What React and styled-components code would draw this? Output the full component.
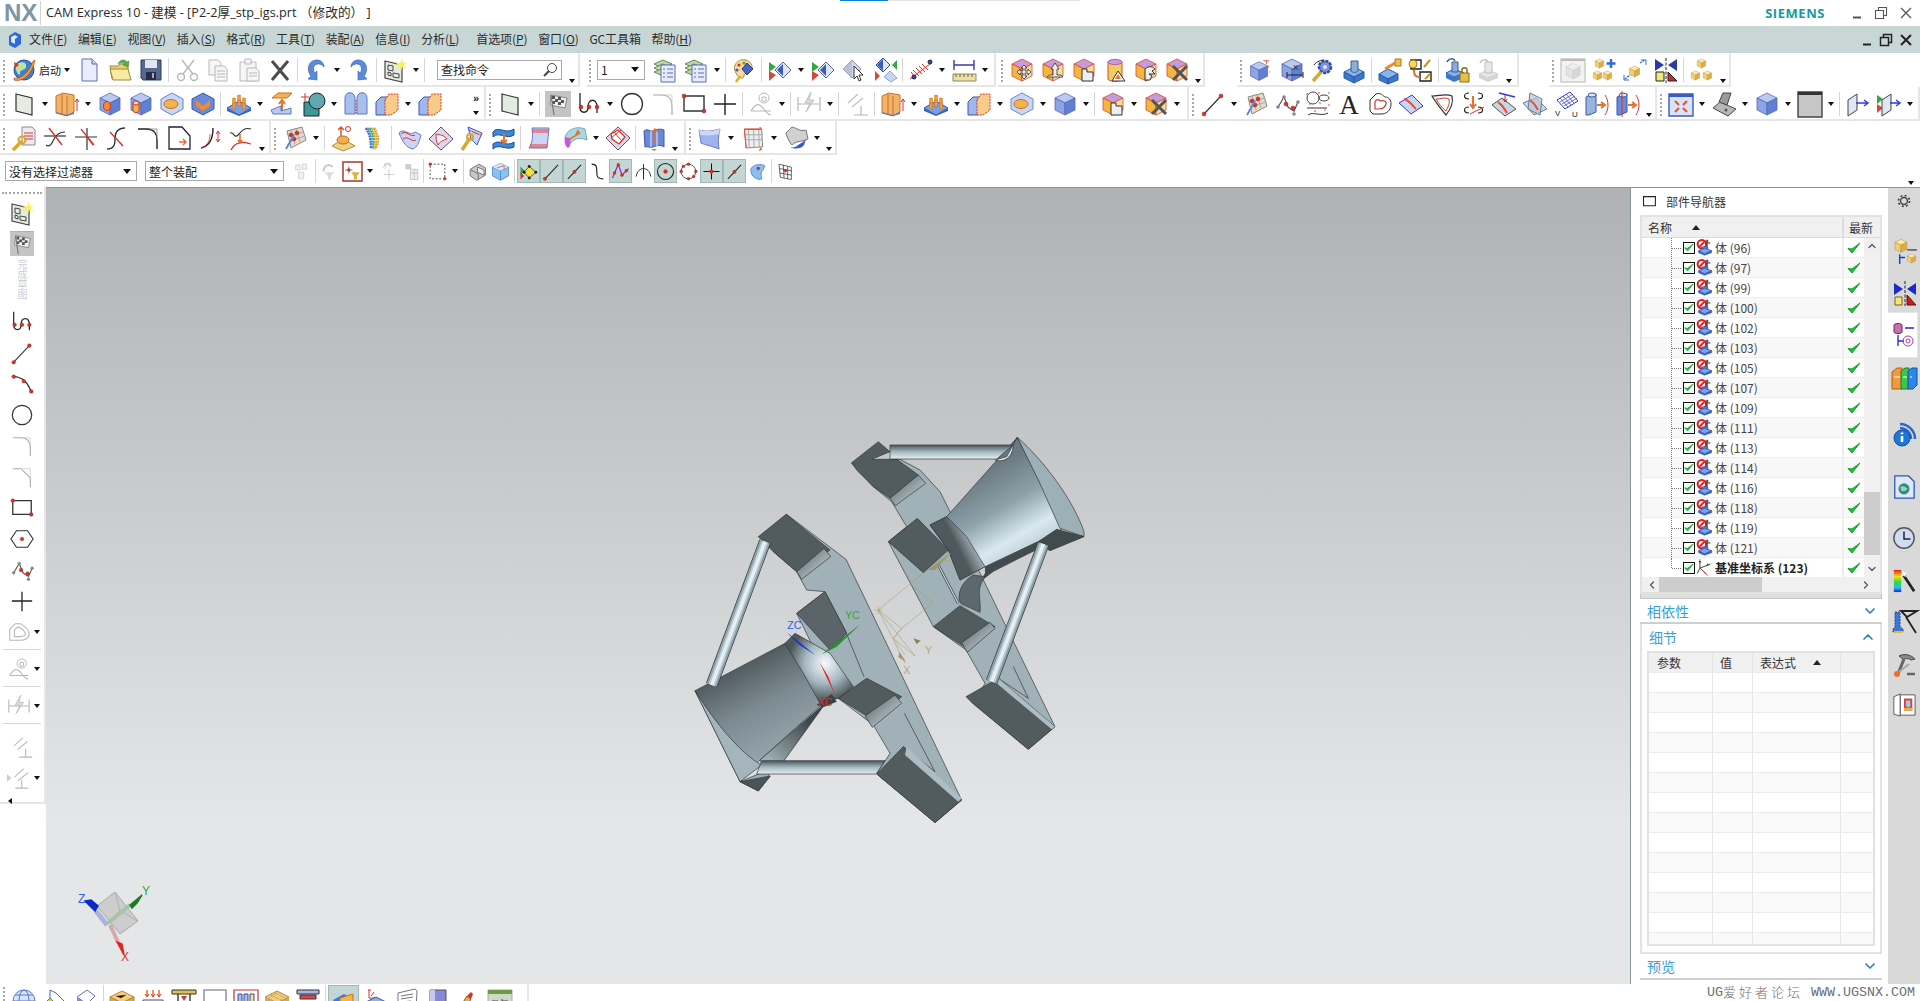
import React from 'react';
import styled, { createGlobalStyle } from 'styled-components';
import { ChevronDown, ChevronUp, ChevronLeft, ChevronRight } from 'lucide-react';

const Global = createGlobalStyle`
  html, body { margin: 0; padding: 0; background: #fff; overflow: hidden; }
  #root { width: 1920px; height: 1001px; }
  * { box-sizing: border-box; }
`;
const UI = `"Noto Sans CJK SC", "Noto Sans", sans-serif`;

const cube = (t, l, r, s = '#5a68a8') => (
  <g stroke={s} strokeWidth=".8" strokeLinejoin="round">
    <path d="M13 2 23 7 13 12 3 7Z" fill={t} /><path d="M3 7 13 12V24L3 19Z" fill={l} /><path d="M23 7V19L13 24V12Z" fill={r} />
  </g>
);
const blue = () => cube('#b9c9f2', '#8aa4e6', '#5f80d6');
const yellow = (x, y, k = .42) => <g transform={`translate(${x} ${y}) scale(${k})`}>{cube('#fde9a8', '#f3cf72', '#e0ad45', '#a98a3a')}</g>;
const purple = (o) => <g>{cube('#c79ad8', '#f6b63c', '#f9dc96', '#d2483c')}{o}</g>;
const dot = (x, y, r = 2) => <circle cx={x} cy={y} r={r} fill="#d8322a" stroke="#8a1a16" strokeWidth=".4" />;
const L = (d, c = '#333', w = 1.2) => <path d={d} fill="none" stroke={c} strokeWidth={w} />;
const gr = '#b8b8b8';
const noSign = <g><circle cx="9" cy="8" r="6.500" fill="#fff" stroke="#d81c1c" strokeWidth="3" /><path d="M5 12 13 4" stroke="#d81c1c" strokeWidth="3" /></g>;

const icons = {
  globe: <g><circle cx="13" cy="13" r="10" fill="#3f7fd8" stroke="#234a94" /><path d="M8 6c4-2 8 0 7 4s-6 2-6 6-3 0-4-3 1-6 3-7Z" fill="#bfe3a0" /><path d="M3 21C9 23 18 16 22 4l2-1C22 16 12 26 3 23Z" fill="#f0a020" stroke="#b2401c" strokeWidth=".6" /><path d="M3 5l5 3-4 3Z" fill="#d8322a" /></g>,
  doc: <g><path d="M6 2h10l5 5v17H6Z" fill="#e9eefc" stroke="#5a6ab8" /><path d="M16 2v5h5" fill="#c9d4f2" stroke="#5a6ab8" /></g>,
  folder: <g><path d="M3 9h8l2-2h8v15H5Z" fill="#e8d070" stroke="#9a8a3a" /><path d="M3 12h18l3 11H6Z" fill="#f8eaa0" stroke="#9a8a3a" /><path d="M11 7C13 2 18 2 20 5l2-1-1 6-5-2 2-1c-2-2-5-1-7 0Z" fill="#58b04a" stroke="#2f7a2a" strokeWidth=".5" /></g>,
  floppy: <g><path d="M3 3h20v20H5l-2-2Z" fill="#56688e" stroke="#2d3b5c" /><path d="M7 3h12v8H7Z" fill="#dfe6f2" /><path d="M8 15h10v8H8Z" fill="#222d46" /><path d="M14 16h2v5h-2Z" fill="#aab" /></g>,
  scissors: <g stroke={gr} strokeWidth="1.4" fill="none"><path d="M20 3 9 17M8 3l11 14" /><circle cx="7" cy="20" r="3.5" /><circle cx="20" cy="20" r="3.5" /></g>,
  copy: <g stroke={gr} fill="#f6f6f6"><path d="M4 3h9l3 3v12H4Z" /><path d="M10 9h9l3 3v12H10Z" /><path d="M12 14h8M12 17h8M12 20h8" /></g>,
  paste: <g stroke={gr} fill="#f6f6f6"><path d="M4 5h16v19H4Z" /><path d="M9 2h6v5H9Z" /><path d="M11 11h9l3 3v10H11Z" /><path d="M13 16h8M13 19h8" /></g>,
  x: <path d="M5 4 21 23M21 4 5 23" stroke="#4c4c4c" strokeWidth="3" />,
  undo: <g><path d="M8 21C2 13 7 4 15 5c3 .4 6 3 6 7-2-3-6-4-9-2-2 2-2 6 0 8l2-2v9l-9-1Z" transform="translate(0 -2)" fill="#5a8ad8" stroke="#2c5ab0" strokeWidth=".6" /></g>,
  redo: <g transform="matrix(-1 0 0 1 26 0)"><path d="M8 21C2 13 7 4 15 5c3 .4 6 3 6 7-2-3-6-4-9-2-2 2-2 6 0 8l2-2v9l-9-1Z" transform="translate(0 -2)" fill="#5a8ad8" stroke="#2c5ab0" strokeWidth=".6" /></g>,
  role: <g><path d="M3 4 20 8V25L3 21Z" fill="#e6ebe2" stroke="#444" strokeWidth="1.2" /><path d="M6 8l5 1v5l-5-1ZM6 15l3 1v3l-3-1ZM11 16l6 1v4l-6-1Z" fill="none" stroke="#444" /><path d="M20 1l1 5 4-1-3 3 3 3-5-1-1 4-2-4-4 1 3-3-3-3 5 1Z" fill="#f8ee70" /></g>,
  stack: <g><path d="M2 7 11 3 20 7 11 11Z" fill="#b8d8a0" stroke="#6a8a5a" /><path d="M2 11 11 7 20 11 11 15Z" fill="#c8e0b0" stroke="#6a8a5a" /><path d="M2 15 11 11 20 15 11 19Z" fill="#b8d8a0" stroke="#6a8a5a" /><path d="M9 8h14v17H9Z" fill="#e6ecfa" stroke="#5a6ab8" /><path d="M11 12h2M15 12h6M11 16h2M15 16h6M11 20h2M15 20h6" stroke="#5a6ab8" /></g>,
  palette: <g><path d="M5 16C0 8 8 1 15 3c6 2 8 8 4 11-4 2-6 2-6 5s-6 3-8-3Z" fill="#f6dc98" stroke="#b08a3a" /><circle cx="8" cy="8" r="1.6" fill="#d8322a" /><circle cx="13" cy="6" r="1.6" fill="#48a848" /><circle cx="6" cy="13" r="1.6" fill="#3a5ac8" /><path d="M16 6l6 6-6 6-5-6Z" fill="#4a62c0" stroke="#223a90" /><path d="M9 19l-4 6" stroke="#e0b030" strokeWidth="2.5" /></g>,
  diaL: <g><path d="M2 5l7 5-7 5Z" fill="#34a848" /><path d="M2 14l7 4-7 6Z" fill="#d8483a" /><path d="M16 5l8 8-8 8-8-8Z" fill="#dfe6f6" stroke="#56689a" /><path d="M16 7l-6 6 6 6Z" fill="#3a5cc0" /></g>,
  diaC: <g><path d="M11 3l9 9-9 9-9-9Z" fill="#d3d8ea" stroke="#8a92b0" /><path d="M11 3v18l-9-9Z" fill="#b8c0da" /><path d="M13 9l9 9-4 0 2 5-2 1-2-5-3 3Z" fill="#fff" stroke="#333" /></g>,
  dia4: <g><path d="M11 1l7 7-7 7-7-7Z" fill="#dfe6f6" stroke="#334a90" /><path d="M11 2v12l-6-6Z" fill="#3a5cc0" /><path d="M18 14l7 7-6 4-7-5Z" fill="#c8d6f6" stroke="#8aa4e6" /><path d="M25 3v10l-5-5Z" fill="#34a848" /><path d="M3 14l5 5-5 5Z" fill="#d8483a" /></g>,
  axis: <g stroke="#d8322a" strokeWidth="1"><path d="M2 22 22 7" /><path d="M5 13l6 6M8 11l6 6M11 9l6 6M14 7l6 6M3 15l5 6" /><circle cx="22" cy="5" r="2" fill="#3a4ab8" stroke="#222" /><circle cx="6" cy="20" r="2" fill="#3a4ab8" stroke="#222" /></g>,
  ruler: <g><path d="M3 3v10M23 3v10M3 8h20" stroke="#3a3ab0" strokeWidth="1.4" /><path d="M2 17h23v7H2Z" fill="#f0e0a0" stroke="#8a8a6a" /><path d="M5 17v3M9 17v3M13 17v3M17 17v3M21 17v3" stroke="#665" /></g>,
  pMove: purple(<path d="M15 8l3 3h-2v3h3v-2l3 3-3 3v-2h-3v3h2l-3 3-3-3h2v-3h-3v2l-3-3 3-3v2h3v-3h-2Z" fill="#eee" stroke="#333" strokeWidth=".8" />),
  pUp: purple(<path d="M15 6l4 6h-2v6h4l2 2H7l2-2h4v-6h-2Z" fill="#eee" stroke="#333" strokeWidth=".8" />),
  pHand: purple(<path d="M11 12h5v3h6v9H11Z" fill="#eee" stroke="#333" />),
  cyl: <g><path d="M6 5v17c0 3 14 3 14 0V5Z" fill="#f4cc5c" stroke="#d2483c" /><ellipse cx="13" cy="5" rx="7" ry="2.6" fill="#c79ad8" stroke="#a060b8" /><path d="M16 14l7 10H10Z" fill="#fff" stroke="#333" /><path d="M16 17l3 5h-6Z" fill="#e87030" /></g>,
  pSwap: purple(<path d="M12 12c4-4 9-2 10 0l-3 2 3 3-6 0 3 2-2 4h-5Z" fill="#eee" stroke="#333" />),
  pX: purple(<path d="M9 9 23 23M23 9 9 23" stroke="#555" strokeWidth="3" />),
  bMeas: <g transform="translate(0 3) scale(.85)">{blue()}<path d="M18 1h7M22 1v4M25 7l-3 3" stroke="#d8322a" /><path d="M25 14h1" stroke="#d8322a" /></g>,
  bX: <g>{blue()}<path d="M8 18h16M8 15v6M24 15v6" stroke="#222" /><text x="14" y="13" fontSize="8" fontFamily="Liberation Sans" fill="#222">X</text></g>,
  gear: <g><circle cx="15" cy="10" r="6" fill="#7a92d8" stroke="#324a98" strokeDasharray="3 1" strokeWidth="2.5" /><circle cx="15" cy="10" r="2" fill="#dfe6f6" /><path d="M3 24 11 15" stroke="#d8a830" strokeWidth="3.5" /><path d="M4 8c3-4 8-5 10-5" stroke="#222" fill="none" /></g>,
  blockCyl: <g transform="translate(0 4)">{<path d="M3 11 13 6 23 11 13 16Z" fill="#8ab4e8" stroke="#2c5ab0" />}<path d="M3 11v6l10 5V16ZM23 11v6l-10 5V16Z" fill="#3a78c8" stroke="#2c5ab0" /><path d="M10 0h7v10c-2 2-5 2-7 0Z" fill="#8ab0d8" stroke="#3a5a90" /></g>,
  blockLink: <g transform="translate(0 4)"><path d="M2 13 11 8 21 13 11 18Z" fill="#8ab4e8" stroke="#2c5ab0" /><path d="M2 13v6l9 4v-5ZM21 13v6l-10 4v-5Z" fill="#3a78c8" stroke="#2c5ab0" /><path d="M8 8 18 2" stroke="#e89030" strokeWidth="3" /><path d="M18 -2h6v7h-6Z" fill="#f0c050" stroke="#b07020" /></g>,
  linkEd: <g><path d="M3 3h10v9H3ZM12 15h11v9H12Z" fill="#fff" stroke="#222" strokeWidth="1.4" /><circle cx="5" cy="7" r="4" fill="#f6d860" stroke="#a08020" /><path d="M6 13c0 6 2 7 6 7" stroke="#e87030" strokeWidth="2" fill="none" /><path d="M16 10 22 3" stroke="#c89020" strokeWidth="2" /><path d="M17 22 22 17" stroke="#c89020" strokeWidth="2" /></g>,
  lock: <g><g transform="translate(0 1)"><path d="M2 15 10 11 20 15 10 19Z" fill="#8ab4e8" stroke="#2c5ab0" /><path d="M2 15v5l8 4v-5ZM20 15v5l-10 4v-5Z" fill="#3a78c8" /><path d="M8 4h6v10H8Z" fill="#8ab0d8" stroke="#3a5a90" /></g><path d="M3 5c2-4 7-4 8-1" stroke="#3a5a90" fill="none" strokeWidth="1.5" /><path d="M16 16h9v9h-9Z" fill="#e6c040" stroke="#8a6a1a" /><path d="M18 16v-3c0-3 5-3 5 0v3" stroke="#8a6a1a" fill="none" strokeWidth="1.5" /></g>,
  lockG: <g opacity=".95"><path d="M4 17 13 13 23 17 13 21Z" fill="#e6e6e6" stroke="#ccc" /><path d="M4 17v4l9 4v-4ZM23 17v4l-10 4v-4Z" fill="#d2d2d2" /><path d="M10 5h7v11h-7Z" fill="#e6e6e6" stroke="#bbb" /><path d="M5 6c2-4 7-4 8-1" stroke="#bbb" fill="none" strokeWidth="1.5" /></g>,
  cubesG: <g><path d="M1 2h24v23H1Z" fill="#f2f2f2" stroke="#ccc" strokeWidth="1.5" /><path d="M1 2h24v2H1Z" fill="#bbb" /><g transform="translate(4 5) scale(.7)" opacity=".7">{cube('#eee', '#ddd', '#ccc', '#bbb')}</g></g>,
  cubesAdd: <g>{yellow(3, 1)}{yellow(1, 13)}{yellow(11, 13)}<path d="M20 2v9M15.5 6.500h9" stroke="#2c68e0" strokeWidth="2.4" /></g>,
  cubeScale: <g>{yellow(6, 8, .5)}<path d="M18 6l5-3M3 22l5-4" stroke="#3a68d0" strokeDasharray="2 1" strokeWidth="1.4" /><path d="M19 3h5v5M2 18v5h5" stroke="#3a68d0" fill="none" /></g>,
  mirror: <g><path d="M2 2l9 6-9 6ZM24 2l-9 6 9 6Z" fill="#2c3aa8" /><path d="M13 1v25" stroke="#222" strokeDasharray="3 1.5" /><path d="M3 15h8v9H3Z" fill="#f2e878" stroke="#222" /><path d="M15 15l9 9h-9Z" fill="#c8302a" stroke="#222" /></g>,
  cubes3: <g>{yellow(7, 1)}{yellow(1, 13)}{yellow(13, 13)}</g>,
  plane: <path d="M5 3 21 7V24L5 20Z" fill="#e4ece2" stroke="#333" strokeWidth="1.2" />,
  extrude: <g><path d="M2 5l7-3 11 2v17l-7 4-11-3Z" fill="#f4b266" stroke="#c8702a" /><path d="M8 3v20M13 5v20" stroke="#c8702a" /><path d="M2 21l11 3 7-3v2l-7 2-11-3Z" fill="#5a78c8" /><path d="M23 20V8M21 11l2-3 2 3" stroke="#d8322a" fill="none" /></g>,
  hole1: <g>{blue()}<ellipse cx="10" cy="15" rx="3.500" ry="4.500" fill="#f08a30" stroke="#d8322a" /></g>,
  hole2: <g>{blue()}<path d="M5 12h6v8c-1 2-5 2-6 0Z" fill="#f4b24a" stroke="#d8322a" /><ellipse cx="8" cy="12" rx="3" ry="2" fill="#f9dc96" stroke="#d8322a" /></g>,
  hex1: <g><path d="M13 2 24 8V18L13 24 2 18V8Z" fill="#c6d6f4" stroke="#6a88c8" /><ellipse cx="12" cy="13" rx="7" ry="4.500" fill="#f4b24a" stroke="#c8702a" /></g>,
  hex2: <g><path d="M13 2 24 8V18L13 24 2 18V8Z" fill="#6a8ad8" stroke="#3a58a8" /><path d="M6 9l7 6 7-6v6l-7 5-7-5Z" fill="#f08a30" /></g>,
  pegs: <g><path d="M1 17 13 10 25 17 13 24Z" fill="#7aa0e0" stroke="#3a58a8" /><path d="M1 17v3l12 5v-1ZM25 17v3l-12 5v-1Z" fill="#3a68c0" />{[[8, 10], [13, 7], [18, 10], [8, 15], [13, 12], [18, 15]].map(([x, y]) => <path key={x + '-' + y} d={`M${x - 1.5} ${y - 3}h3v6h-3Z`} fill="#f09a3a" stroke="#c06a1a" strokeWidth=".4" />)}</g>,
  plateUp: <g><path d="M3 7 9 2H23L18 7Z" fill="#f4b24a" stroke="#c8702a" /><path d="M13 21V10M10 13l3-4 3 4" stroke="#e8702a" strokeWidth="2" fill="none" /><path d="M2 19l10-4v5l10-3v6H4Z" fill="#b8ccf0" stroke="#5a78c8" /></g>,
  unite: <g><path d="M1 6h8M5 2v8" stroke="#d8322a" /><path d="M4 11h15v14H4Z" fill="#3a9a98" stroke="#222" /><circle cx="17" cy="10" r="8" fill="#60a8b0" stroke="#222" /></g>,
  tubes: <g><path d="M2 23V7c0-7 10-7 10 0v16Z" fill="#a8c0ee" stroke="#5a78c8" /><path d="M14 23V7c0-7 10-7 10 0v16Z" fill="#a8c0ee" stroke="#5a78c8" /><path d="M13 9v14" stroke="#d8322a" strokeDasharray="2 1" /></g>,
  split: <g><path d="M2 11 7 6H16V22L11 24H2Z" fill="#9eb8ee" stroke="#3a58a8" /><path d="M11 9 15 3H24V19L17 24H11Z" fill="#f6cc88" stroke="#d8322a" strokeDasharray="2 1" /></g>,
  flag: <g><path d="M0 0h26v26H0Z" fill="#c4c4c4" /><path d="M6 4l16 3-2 10-15-3Z" fill="#eee" stroke="#888" /><path d="M7 5h3v3H7ZM13 6h3v3h-3ZM10 8h3v3h-3ZM16 9h3v3h-3ZM7 10h3v3H7ZM13 11h3v3h-3Z" fill="#555" /><path d="M6 4 9 24" stroke="#777" strokeWidth="1.2" /></g>,
  spline: <g>{L('M4 2v14c0 7 8 7 8 0 0-9 9-9 9 0v6', '#222', 1.3)}{dot(5, 16)}{dot(13, 16)}{dot(21, 16)}</g>,
  circle: <circle cx="13" cy="13" r="10.5" fill="none" stroke="#333" strokeWidth="1.3" />,
  fillet: <g>{L('M3 4h9c7 0 10 5 10 11v9', '#aaa')}{L('M14 4h8v9', '#ccc', .8)}</g>,
  chamfer: <g>{L('M3 4h9l10 10v10', '#aaa')}{L('M14 4h8v9', '#ccc', .8)}</g>,
  rect: <g>{L('M3 5h20v15H3Z', '#333', 1.4)}{dot(3, 5)}{dot(23, 20)}</g>,
  cross: L('M13 3v21M2 13h22', '#222', 1.4),
  hexS: <g>{L('M7 4h12l6 9-6 9H7L1 13Z', '#333', 1.2)}{dot(13, 13)}</g>,
  studio: <g>{L('M4 16 10 6 14 16 20 20 24 11', '#555')}<circle cx="4" cy="16" r="1.8" fill="#888" /><circle cx="10" cy="6" r="1.8" fill="#888" /><circle cx="20" cy="23" r="1.8" fill="#888" /><circle cx="24" cy="11" r="1.8" fill="#888" />{dot(12, 13)}{dot(19, 17)}</g>,
  line: <g>{L('M4 23 21 5', '#333')}{dot(4, 23)}{dot(21, 5)}</g>,
  arc: <g>{L('M4 5c9 0 16 7 19 17', '#333', 1.4)}{dot(4, 5)}{dot(15, 10)}{dot(23, 21)}</g>,
  offset: <g>{L('M3 22V10l6-6h6c4 3 9 6 9 11s-5 7-9 7Z', gr)}{L('M8 18v-7l3-3h3c3 3 6 4 6 7 0 2-2 3-6 3Z', gr)}</g>,
  skGray: <g>{L('M3 20h20M3 20c5-8 8-8 12-3 2 3 4 6 8 7', gr)}<circle cx="16" cy="7" r="5" fill="none" stroke={gr} /><path d="M14 6h4v4h-4Z" fill="none" stroke={gr} /></g>,
  dimGray: <g>{L('M2 6v14M24 6v14M2 13h22', gr)}<path d="M15 1 9 12h5l-4 9 8-12h-5Z" fill="#ddd" stroke="#c0c0c0" /></g>,
  parallel: <g>{L('M4 12 14 3M8 16 19 7', '#c0c0c0', 1.2)}{L('M10 24h14M17 24v-9', '#b8b8b8')}</g>,
  parallel2: <g><path d="M0 9l5 4-5 4Z" fill="#ccc" />{L('M8 12 18 3M12 16 23 7', '#c0c0c0', 1.2)}{L('M9 24h14M16 24v-9', '#b8b8b8')}</g>,
  frame: <g><path d="M1 3h24v22H1Z" fill="#d8e4f8" stroke="#3a58c8" strokeWidth="1.4" /><path d="M1 3h24v3H1Z" fill="#3a58c8" /><path d="M7 10l4 4M19 10l-4 4M7 21l4-4M19 21l-4-4" stroke="#e8502a" strokeWidth="2" /></g>,
  printer: <g><path d="M2 17 9 11 25 18 17 25Z" fill="#b8b8b8" stroke="#444" /><path d="M8 11 12 2h8l-4 12Z" fill="#9a9a9a" stroke="#444" /><circle cx="15" cy="19" r="1.500" fill="#555" /></g>,
  bCube: blue(),
  grayPanel: <g><path d="M1 1h24v25H1Z" fill="#c6c6c6" stroke="#444" strokeWidth="1.4" /><path d="M1 1h24v3H1Z" fill="#333" /></g>,
  slabA: <g><path d="M3 9l9-6v16l-9 6Z" fill="#dfe6f6" stroke="#444" /><path d="M11 12h12M19 9l4 3-4 3" stroke="#2c3ae0" strokeWidth="1.4" fill="none" /></g>,
  slabB: <g><path d="M1 4l6 4-6 5Z" fill="#34a848" /><path d="M1 13l6 4-6 5Z" fill="#d8483a" /><path d="M6 9l9-6v16l-9 6Z" fill="#dfe6f6" stroke="#444" /><path d="M14 12h10M20 9l4 3-4 3" stroke="#2c3ae0" strokeWidth="1.4" fill="none" /></g>,
  pts: <g><path d="M3 24C8 20 16 26 23 22" stroke="#333" fill="none" /><ellipse cx="8" cy="7" rx="6" ry="6" fill="none" stroke="#444" /><ellipse cx="19" cy="7" rx="5" ry="3" fill="none" stroke="#444" /><path d="M2 17h20" stroke="#333" />{[[2, 3], [14, 2], [24, 2], [5, 13], [15, 12], [24, 14], [10, 20], [20, 19]].map(([x, y]) => <circle key={x + '.' + y} cx={x} cy={y} r=".8" fill="#d8322a" />)}</g>,
  letterA: <text x="13" y="23" fontSize="27" textAnchor="middle" fontFamily="Liberation Serif" fill="#222">A</text>,
  heart: <g><path d="M3 9 9 3c5-2 7 2 9 3 4 0 6 3 6 7 0 7-5 10-10 10H6l-3-3Z" fill="#fff" stroke="#333" /><path d="M8 11c1-3 4-3 5-1 3-1 7 0 6 3-1 3-4 5-7 5H8Z" fill="none" stroke="#d8322a" strokeWidth="1.2" /></g>,
  sheetCurve: <g><path d="M1 12 14 4 25 15 13 23Z" fill="#c8d6f4" stroke="#2c3ae0" /><path d="M6 8c6 2 9 7 12 10" stroke="#e8502a" strokeWidth="2" fill="none" /></g>,
  patch: <g><path d="M3 5c7 0 14-3 20 0 2 8-2 14-6 19C12 18 7 12 3 5Z" fill="#fff" stroke="#333" strokeWidth="1.2" /><path d="M7 8c5 0 9-2 13 0 1 5-1 8-3 12-4-3-7-7-10-12Z" fill="none" stroke="#d8322a" /></g>,
  drop: <g>{L('M9 2C3 2 3 8 9 8M9 16c-6 0-6 6 0 6', '#222')}{L('M18 2c6 0 6 6 0 6M18 16c6 0 6 6 0 6', '#222')}<path d="M13 5v12M10 13l3 4 3-4" stroke="#e87030" strokeWidth="2" fill="none" /><path d="M10 23 24 16" stroke="#d8322a" /></g>,
  sheetPt: <g><path d="M1 14 11 7 25 18 14 25Z" fill="#c8d6e8" stroke="#555" /><path d="M8 2 24 6" stroke="#2c3ae0" strokeWidth="1.400" /><path d="M14 4v7M12 8l2 3 2-3" stroke="#b8322a" fill="none" /><path d="M7 11c4 3 7 7 9 11" stroke="#e8502a" strokeWidth="2" fill="none" /></g>,
  sheet2: <g><path d="M1 12 14 7 25 18 12 24Z" fill="#c8d6e8" stroke="#6a7a90" /><path d="M8 2 20 8 18 24 6 18Z" fill="#b8c6dc" fillOpacity=".7" stroke="#6a7a90" /><path d="M8 9c4 3 6 6 8 10" stroke="#e8502a" strokeWidth="2" fill="none" /></g>,
  meshUV: <g><path d="M4 9 17 1 25 10 12 18Z" fill="#fff" stroke="#2c3ae0" /><path d="M7 7l8 9M10 5l8 9M13 3l8 9M7 11l13-8M9 13l13-8M11 15l13-8" stroke="#2c3ae0" strokeWidth=".7" /><text x="2" y="25" fontSize="8" fontFamily="Liberation Sans" fill="#222">V</text><text x="19" y="26" fontSize="8" fontFamily="Liberation Sans" fill="#222">U</text></g>,
  cylA: <g><path d="M2 6 9 3h3v18l-7 3H2Z" fill="#9ab4e0" stroke="#3a58a8" /><ellipse cx="8" cy="4" rx="4" ry="2" fill="#dfe6f6" stroke="#3a58a8" /><path d="M13 14h7M17 11l4 3-4 3" stroke="#e87030" strokeWidth="2" fill="none" /><path d="M21 4c4 6 4 14 0 20" stroke="#d8322a" fill="none" /></g>,
  cylB: <g><path d="M2 6 9 3h3v18l-7 3H2Z" fill="#6a8ad8" stroke="#3a58a8" /><ellipse cx="8" cy="4" rx="4" ry="2" fill="#dfe6f6" stroke="#3a58a8" /><path d="M7 0v26" stroke="#d8322a" /><path d="M13 14h7M17 11l4 3-4 3" stroke="#e87030" strokeWidth="2" fill="none" /><path d="M21 4c4 6 4 14 0 20" stroke="#d8322a" fill="none" /></g>,
  wrenchDoc: <g><path d="M11 2h10l3 3v15H11Z" fill="#f2e8f0" stroke="#8a8a9a" /><path d="M13 8h9M13 11h9M13 14h9" stroke="#d8322a" /><path d="M2 25 11 16" stroke="#d8a830" strokeWidth="3.500" /><circle cx="11" cy="15" r="3.500" fill="none" stroke="#d8a830" strokeWidth="2" /></g>,
  trimX: <g>{L('M4 20c4 3 6-2 8-6s6-7 11-7', '#333', 1.2)}{L('M2 11h22', '#333')}<path d="M7 3 20 20" stroke="#d8322a" strokeWidth="1.4" /></g>,
  trimT: <g>{L('M2 12h22M14 3v22', '#333')}{L('M14 12 20 20', '#d8322a', 1.2)}<path d="M8 4 21 20" stroke="#d8322a" strokeWidth="1.200" /><path d="M14 4v6" stroke="#888" strokeDasharray="1 1" /></g>,
  curveX: <g>{L('M3 24c8 0 8-6 8-10s1-11 10-11', '#333', 1.4)}<path d="M6 7 19 21" stroke="#d8322a" strokeWidth="1.4" /></g>,
  filletD: <g>{L('M3 4h9c7 0 10 5 10 11v9', '#222', 1.4)}{L('M14 4h8v9', '#888', .8)}</g>,
  pageArrow: <g>{L('M3 2h13l8 9v13H3Z', '#223', 1.3)}<path d="M13 17h6M17 14l3 3-3 3" stroke="#e87030" strokeWidth="1.5" fill="none" /></g>,
  arcUp: <g>{L('M4 23c9-2 12-9 12-20', '#222', 1.4)}{L('M4 23c8-3 9-9 9-14', '#d8322a', .8)}<path d="M21 6v11M19 9l2-3 2 3M19 14l2 3 2-3" stroke="#d8322a" fill="none" /></g>,
  curves: <g>{L('M2 8c4-2 4 6 8 2s6-8 13-6', '#333')}<path d="M3 25c4-8 12-9 20-6" stroke="#d8322a" fill="none" strokeWidth="1.3" /><path d="M12 9v9M10 15l2 3 2-3" stroke="#e87030" strokeWidth="1.6" fill="none" /></g>,
  surfPts: <g><path d="M5 6 20 2 24 15 9 23Z" fill="#e8d8c8" stroke="#888" /><path d="M9 5l4 14M14 4l4 13M6 11l16-4M7 16l16-5" stroke="#aaa" />{dot(9, 10)}{dot(15, 8)}{dot(12, 14)}<path d="M4 24 12 10" stroke="#5a8ad8" strokeWidth="2" /></g>,
  hand: <g><path d="M2 21 13 14 25 21 13 26Z" fill="#f2d080" stroke="#b08a3a" /><ellipse cx="13" cy="15" rx="6" ry="4" fill="#f0b050" stroke="#c06a1a" /><path d="M11 11V2M8 5l3-3 3 3" stroke="#e8502a" strokeWidth="1.500" fill="none" /><circle cx="18" cy="4" r="2.500" fill="none" stroke="#d8322a" /></g>,
  swatch: <g>{['#4a62c8', '#4aa8d8', '#48b048', '#e0c030', '#f09a3a'].map((c, i) => <path key={c} d={`M${5 + i * 2} 3c5 8 5 14 ${5 - i} 21`} stroke={c} strokeWidth="2.600" fill="none" strokeDasharray="2 .7" />)}</g>,
  waveS: <g><path d="M2 8C7 2 12 12 18 7l6 3c-2 8-4 12-8 14-6-1-10-6-14-16Z" fill="#ccd4f4" stroke="#6a78c8" /><path d="M4 9c5-5 9 4 14 1M6 14c5-4 9 4 13 1" stroke="#d8322a" fill="none" /></g>,
  diaRed: <g><path d="M13 2 25 14 13 25 1 14Z" fill="#d8d8f0" stroke="#7a4a5a" /><path d="M8 9c4 1 8 1 11 5-3 1-8 3-9 6-2-3-2-8-2-11Z" fill="#f2f2fc" stroke="#d8322a" /></g>,
  wrenchFl: <g><path d="M9 2 23 8l-5 12-6-6Z" fill="#c8d6f4" stroke="#3a58c8" /><path d="M10 5c4 2 8 4 12 5" stroke="#d8322a" strokeDasharray="2 1" /><path d="M3 25 11 13" stroke="#d8a830" strokeWidth="3.500" /><circle cx="11" cy="12" r="3" fill="none" stroke="#d8a830" strokeWidth="2" /></g>,
  blueS: <g><path d="M3 7C8 0 16 10 24 4v6c-8 5-15-4-21 2Z" fill="#3a8ad8" stroke="#1c4a98" /><path d="M3 19C10 13 16 23 24 17v5c-8 4-15-4-21 2Z" fill="#3a8ad8" stroke="#1c4a98" /><path d="M14 9v9M11 15l3 3 3-3" stroke="#e8702a" strokeWidth="2" fill="none" /></g>,
  ribbon: <g><path d="M6 3h17l-2 20H3c4-6 4-13 3-20Z" fill="#ccd4f4" stroke="#6a78c8" /><path d="M6 5h17M6 7h16M4 20h17M4 22h17" stroke="#e8402a" /></g>,
  rainbowS: <g><path d="M3 12C6 3 16 1 23 4l2 11c-7-3-15-2-19 7Z" fill="#a8d8e0" stroke="#7aa" /><path d="M3 12c-1 5 0 9 3 11 3-2 3-6 2-10Z" fill="#c858d8" /><path d="M8 14 16 9v-3M14 9l2-3 2 3" stroke="#e87030" fill="none" strokeWidth="1.600" /></g>,
  gridRed: <g><path d="M13 2 25 13 13 25 1 13Z" fill="#d8d8f0" stroke="#7a4a5a" /><path d="M6 9l7-4 7 7-6 7-7-5Z" fill="#fff" stroke="#d8322a" strokeWidth="1.300" /><path d="M9 7l7 8M6 13l10-8" stroke="#d8322a" /></g>,
  tube2: <g><path d="M3 6c4-3 6 1 9 0s6-3 11-1v17c-4-3-8-1-11 0S7 21 4 22Z" fill="#6a8ad8" stroke="#3a58a8" /><path d="M10 6v16M16 6v15" stroke="#e8eefc" /><path d="M14 18V4M11 7l3-3 3 3" stroke="#e87030" strokeWidth="1.500" fill="none" /><path d="M10 24h6l-3 2Z" fill="#888" /></g>,
  sheetBlue: <g><path d="M2 5c7 2 14 1 21-1-2 7-2 15-1 20C15 21 8 20 4 18Z" fill="#9eb4ee" stroke="#6a78c8" /><path d="M2 5c7 2 14 1 21-1L22 9C15 11 8 10 3 10Z" fill="#cdd8f6" /></g>,
  warp: <g transform="rotate(10 13 13)"><path d="M3 6 20 3 24 20 8 24Z" fill="#eee" stroke="#888" /><path d="M7 5l4 18M12 4l4 19M17 3l4 19M5 11l17-3M6 16l17-3" stroke="#aaa" /><path d="M3 6 20 3" stroke="#e8502a" strokeWidth="1.500" /><path d="M3 6 8 24" stroke="#e8502a" /><path d="M17 1l2 0 1 3ZM22 20l-1 5 3-2Z" fill="#e87030" /></g>,
  sheetGray: <g><path d="M3 8 9 2c5 1 8 5 14 3l2 9c-5 3-11 1-16 6-3-3-5-8-6-12Z" fill="#d0d0d0" stroke="#777" /><path d="M5 20c3 3 6 3 9 1 3-3 6-3 9-7l-2 6c-3 4-8 4-12 3Z" fill="#3a58c8" /></g>,
  sf: <g opacity=".75"><path d="M5 4h6v7H5ZM14 3h6v7h-6ZM9 14h7v9H9Z" fill="#eee" stroke="#b8b8b8" /></g>,
  sf1: <g><path d="M5 13c0-10 9-10 12-6" stroke="#ccc" strokeWidth="3" fill="none" /><path d="M6 14h14l-5 5v5h-4v-5Z" fill="#ddd" /></g>,
  sfilter: <g><path d="M0 0h26v26H0Z" fill="#fff" stroke="#b03030" strokeWidth="2" /><path d="M8 6v10M3 11h10" stroke="#555" />{dot(8, 11)}<path d="M11 14h12l-4 5v5h-4v-5Z" fill="#e0b030" /></g>,
  snap3: <g><path d="M9 6c0-5 8-5 8 0" stroke="#ccc" strokeWidth="2.500" fill="none" /><path d="M15 10v14M8 17h14" stroke="#bbb" /><path d="M12 6l-3 3-3-3" stroke="#ccc" fill="none" /></g>,
  snap4: <g><path d="M6 3h8v7H6Z" fill="#ccc" /><path d="M13 10h10v14H13Z" fill="#eee" stroke="#bbb" /><path d="M13 15h10M18 10v14" stroke="#bbb" /></g>,
  marquee: <g><path d="M3 3h20v20H3Z" fill="none" stroke="#444" strokeDasharray="2.500 2.500" strokeWidth="1.300" />{dot(3, 3)}{dot(23, 23)}</g>,
  iso: <g><path d="M3 10 15 3 24 8V18L12 25 3 19Z" fill="#c8c8c8" stroke="#555" /><path d="M13 7l9 4v7l-9-4Z" fill="#eee" stroke="#555" /><path d="M4 11l10 5v8" stroke="#555" fill="none" /></g>,
  view: <g><path d="M13 2 24 7V19L13 25 2 19V7Z" fill="#8ac4ee" stroke="#3a78c8" /><path d="M2 7 13 12 24 7M13 12v13" stroke="#3a78c8" fill="none" /><path d="M13 2 24 7 13 12 2 7Z" fill="#d8e8f6" /><path d="M8 8 18 5v6" stroke="#e04848" fill="none" /></g>,
  ptsS: <g><path d="M2 6l6 6-6 6Z" fill="#34a848" /><path d="M2 14l5 5-5 5Z" fill="#d8322a" /><path d="M14 6l9 8-9 8-7-8Z" fill="#f6e040" stroke="#333" /><circle cx="14" cy="6" r="2" fill="#222" /><circle cx="14" cy="22" r="2" fill="#222" /><circle cx="23" cy="14" r="2" fill="#222" /><circle cx="7" cy="14" r="2" fill="#222" /></g>,
  lineEnd: <g>{L('M4 23 22 4', '#222', 1.4)}{dot(4, 23, 2.4)}</g>,
  lineMid: <g>{L('M4 23 22 4', '#222', 1.4)}{dot(13, 13.500, 2.4)}</g>,
  curveS: L('M5 3c7 0 7 4 7 10s0 10 9 10', '#222', 1.6),
  vertex: <g>{L('M2 22 10 3 15 18 24 9', '#7a2ac8', 1.6)}{dot(10, 4)}{dot(15, 18)}{dot(5, 15)}{dot(21, 12)}</g>,
  arrowT: L('M13 3v21M3 20c1-8 6-11 10-11s9 3 10 11', '#222', 1.3),
  center: <g><circle cx="13" cy="13" r="11" fill="none" stroke="#222" strokeWidth="1.5" />{dot(13, 13, 2.6)}</g>,
  circPts: <g><circle cx="13" cy="13" r="10" fill="none" stroke="#444" strokeWidth="1.2" />{dot(13, 3)}{dot(13, 23)}{dot(3, 13)}{dot(23, 13)}{dot(6, 6)}{dot(20, 20)}</g>,
  plus: <g>{L('M13 2v22M2 13h22', '#111', 1.4)}{dot(13, 13, 2.6)}</g>,
  surfD: <g><path d="M4 9c4-6 13-7 19-4l-3 7c-2 1-3 5-1 11l-3 1C8 22 3 18 4 9Z" fill="#8ac0ee" stroke="#3a78c8" />{dot(14, 9)}</g>,
  gridS: <g><path d="M4 3l17 4v17L6 21Z" fill="#fff" stroke="#333" /><path d="M5 9l16 3M5 15l16 3M10 4l1 18M16 6v17" stroke="#333" />{dot(13, 12)}</g>,
  b1: <g><circle cx="13" cy="13" r="11" fill="#d8e4fa" stroke="#5a78c8" /><ellipse cx="13" cy="13" rx="5" ry="11" fill="none" stroke="#5a78c8" /><path d="M2 13h22M4 7h18M4 19h18" stroke="#5a78c8" /></g>,
  b2: <g><path d="M8 2l6 3 8 8-8 8H8Z" fill="#fff" stroke="#5a58c8" /><path d="M2 16l6-6 4 4-6 6Z" fill="#d8d830" stroke="#3a9a48" /></g>,
  b3: <g><path d="M4 9 14 2l8 6-8 8Z" fill="#fff" stroke="#6a68c8" /><path d="M4 9l9 7v6L4 17Z" fill="#8a88d8" /></g>,
  b4: <g><path d="M1 9 13 3 25 9 13 15Z" fill="#f0cf80" stroke="#b08a3a" /><path d="M1 9v6l12 6 12-6V9L13 15Z" fill="#d8a850" stroke="#b08a3a" /><path d="M7 8l5 2 5-3" stroke="#d8322a" strokeDasharray="1 1" /></g>,
  b5: <g><path d="M7 2v6M13 2v6M19 2v6" stroke="#e0702a" strokeWidth="1.500" /><path d="M5 6l2 3 2-3M11 6l2 3 2-3M17 6l2 3 2-3" stroke="#d8322a" fill="none" /><path d="M3 12h20v8H3Z" fill="#fff" stroke="#3a4a98" /></g>,
  b6: <g><path d="M1 2h24v4H1Z" fill="#e0c050" stroke="#333" /><path d="M7 6v17M19 6v17M1 23h24" stroke="#333" strokeWidth="1.400" /><path d="M10 8h6l-3 5 3 5h-6l3-5Z" fill="#d8322a" /></g>,
  b7: <path d="M2 2h22v22H2Z" fill="#fff" stroke="#999" strokeWidth="1.600" />,
  b8: <g><path d="M1 2h24v22H1Z" fill="#fff" stroke="#c03030" strokeWidth="1.200" /><path d="M5 6h4v18H5Z" fill="#a8bcee" stroke="#3a4a98" /><path d="M11 6h4v18h-4Z" fill="#a8bcee" stroke="#3a4a98" /><path d="M17 6h4v18h-4Z" fill="#f0e090" stroke="#3a4a98" /></g>,
  b9: <g><path d="M1 9 13 3 25 9 13 15Z" fill="#f0cf80" stroke="#b08a3a" /><path d="M1 9v5l12 6 12-6V9L13 15Z" fill="#d8a850" /><path d="M7 7l12 6M11 5l12 6M5 10l8-5" stroke="#b08a3a" strokeDasharray="1 1" /></g>,
  b10: <g><path d="M2 2h22v4H2Z" fill="#a8b4e8" stroke="#333" /><path d="M5 7h16v4H5Z" fill="#d84848" stroke="#333" /><path d="M2 17h22" stroke="#333" /></g>,
  b11: <g><path d="M2 12 13 6 18 9 6 18Z" fill="#3a78e8" /><path d="M9 10 22 6v13H9Z" fill="#f6b63c" stroke="#c8702a" /></g>,
  b12: <g><path d="M6 2h3M7 2v8h8M12 4l-3 4" stroke="#d8322a" fill="none" /><path d="M4 14 14 9 24 14 14 19Z" fill="#8ab4e8" stroke="#2c5ab0" /><path d="M4 14v6l10 5 10-5v-6L14 19Z" fill="#3a78c8" /></g>,
  b13: <g><path d="M5 5 22 1l2 2-1 19-18 2Z" fill="#fff" stroke="#777" /><path d="M8 8l12-2M8 11l12-2M8 14l10-1" stroke="#777" /></g>,
  b14: <g><path d="M6 2h16v24H6Z" fill="#8a88d8" stroke="#555" /><path d="M6 2h5v24H6Z" fill="#c8c8ee" /></g>,
  b15: <g><path d="M2 24 12 8l4 3-10 16Z" fill="#e8b040" stroke="#805a1a" /><path d="M12 8l4-4 2 2-2 5Z" fill="#d8322a" /><path d="M10 18h14v8H10Z" fill="#fff" stroke="#777" /></g>,
  b16: <g><path d="M2 2h24v24H2Z" fill="#cfd8c4" stroke="#aaa" /><path d="M2 2h24v4H2Z" fill="#6a9a4a" /><path d="M6 13h6M16 13h6M16 11v4" stroke="#444" /></g>,
  cog: <g><circle cx="13" cy="13" r="5" fill="none" stroke="#444" strokeWidth="2" /><circle cx="13" cy="13" r="8" fill="none" stroke="#444" strokeWidth="2.400" strokeDasharray="3 3.280" /></g>,
  tAsm: <g>{yellow(3, 1, .55)}{yellow(15, 15, .38)}<path d="M9 16v9M9 19h5" stroke="#1c3ae0" strokeWidth="1.300" /><path d="M16 12h9" stroke="#222" /></g>,
  tMirror: <g><path d="M3 3l9 6-9 6ZM25 3l-9 6 9 6Z" fill="#1c2ac8" /><path d="M14 1v25" stroke="#222" strokeDasharray="3 1.5" /><path d="M4 17h7v8H4Z" fill="#f2e878" stroke="#805a1a" /><path d="M16 15l9 10h-9Z" fill="#c81c1c" stroke="#601010" /></g>,
  tCam: <g><path d="M4 3c0-2 8-2 8 0v7c0 2-8 2-8 0Z" fill="#c870b0" stroke="#602a60" /><path d="M8 13v11M8 19h6M15 6h9" stroke="#1c2ac8" strokeWidth="1.300" /><circle cx="18" cy="19" r="5" fill="none" stroke="#a83aa8" /><circle cx="18" cy="19" r="2" fill="none" stroke="#a83aa8" /></g>,
  books: <g><path d="M1 7l5-4h5v21H1Z" fill="#f09a3a" stroke="#b85a1a" /><path d="M10 6l4-3h4v21h-8Z" fill="#3ac848" stroke="#1a7a2a" /><path d="M17 6l4-3h5v17l-4 4h-5Z" fill="#2c88e8" stroke="#1a5098" /><path d="M3 12h6M12 12h4M19 12h2" stroke="#fff" /></g>,
  info: <g><path d="M9 4a15 15 0 0 1 15 15M9 8a11 11 0 0 1 11 11" stroke="#2c68c8" strokeWidth="2.500" fill="none" /><circle cx="11" cy="18" r="8" fill="#1c78d8" stroke="#1c4a98" /><path d="M11 16v6M11 12.500v1.800" stroke="#fff" strokeWidth="2.600" /></g>,
  pageG: <g><path d="M3 1h15l6 6v18H3Z" fill="#dfe8fa" stroke="#2c58b8" strokeWidth="1.400" /><circle cx="13" cy="15" r="6" fill="#3a8a70" /><path d="M9 13c3-2 6 0 8 2-2 3-5 3-7 2Z" fill="#8ad8c8" /></g>,
  clock: <g><circle cx="13" cy="13" r="11" fill="#cfdcf4" stroke="#555" strokeWidth="1.600" /><path d="M13 6v8h7" stroke="#223" strokeWidth="1.600" fill="none" /></g>,
  rainbow: <g><defs><linearGradient id="rb" x1="0" y1="0" x2="0" y2="1"><stop offset="0" stopColor="#e81c1c" /><stop offset=".3" stopColor="#f0e020" /><stop offset=".55" stopColor="#30d838" /><stop offset=".8" stopColor="#20c0e8" /><stop offset="1" stopColor="#2020e0" /></linearGradient></defs><path d="M2 1h8v24H2Z" fill="url(#rb)" /><path d="M12 6 24 24" stroke="#222" strokeWidth="3" /><path d="M12 1l1 3 3 0-2 2 1 3-3-2-2 2 1-3" fill="#fff" /></g>,
  wand: <g><path d="M4 4h5v15l3 2v3H2v-3l2-2Z" fill="#3a78d8" stroke="#1c4a98" strokeDasharray="2 1" /><path d="M10 3l16 0-10 6ZM15 9 25 25" stroke="#222" strokeWidth="1.800" fill="none" /><path d="M3 24h9" stroke="#e0c030" strokeWidth="2" /></g>,
  tools: <g><path d="M8 4c6-3 12-1 16 3l-4 1c-3-2-6-2-7 0Z" fill="#8a8a8a" stroke="#444" /><path d="M13 7 7 22" stroke="#666" strokeWidth="3" /><path d="M18 12 8 20" stroke="#aaa" strokeWidth="2" /><circle cx="6" cy="22" r="3" fill="#e87030" /><path d="M16 22h8" stroke="#666" strokeWidth="2.500" /></g>,
  door: <g><path d="M2 4 9 1v24l-7-2Z" fill="#fff" stroke="#555" /><path d="M9 2h16v22H9Z" fill="#fff" stroke="#555" /><path d="M13 6h9v13h-9Z" fill="#e83a3a" /><path d="M15 8h5v6l-2 2-3-2Z" fill="#8ad0f0" /><path d="M13 16h9v3h-9Z" fill="#f0b040" /></g>,
  body: <g>{noSign}<path d="M15 3h4M17 1v11M17 6h5" stroke="#222" strokeWidth="1.400" /><path d="M9 12h9v6H9Z" fill="#6a8ee0" stroke="#1c3a98" /><path d="M4 18 13 14 24 18 13 23Z" fill="#7aa4ee" stroke="#1c3a98" /><path d="M4 18v3l9 4 11-4v-3L13 23Z" fill="#3a68c8" stroke="#1c3a98" strokeWidth=".6" /></g>,
  csys: <g><path d="M6 3v11l9 8M6 14l-4 8M6 14l15-6" stroke="#222" strokeWidth="1.300" fill="none" /><path d="M6 2l-2 3h4ZM20 8l-3-1v3Z" fill="#222" /><path d="M6 2V0" stroke="#1c3ae0" /><path d="M16 11l8-4" stroke="#2c9a3a" /><path d="M12 20l6 5" stroke="#d8322a" strokeWidth="1.500" /></g>,
  rectIc: <path d="M1 3h22v17H1Z" fill="#fff" stroke="#222" strokeWidth="2" />,
};

const Ic = styled.svg`display: block; flex: none; overflow: visible;`;
const Icon = ({ name, size = 26 }) => (
  <Ic width={size} height={size} viewBox="0 0 26 26">{icons[name]}</Ic>
);

const Shell = styled.div`
  width: 1920px; height: 1001px; display: flex; flex-direction: column; overflow: hidden;
  background: #fff; font-family: ${UI}; color: #222;
`;
const TitleBar = styled.div`position: relative; height: 26px; flex: none; display: flex; align-items: center; background: #fff;`;
const Progress = styled.div`
  position: absolute; left: 840px; top: 0; width: 240px; height: 1px; background: #e3e3e3;
  &::before { content: ''; position: absolute; left: 0; top: 0; width: 48px; height: 1px; background: #0a84d8; }
`;
const Logo = styled.div`
  width: 37px; height: 24px; margin-left: 4px; border-right: 1px solid #cfd4d6; flex: none;
  font: 700 24px/24px "Liberation Sans", sans-serif; color: #7d95a4;
`;
const Title = styled.div`margin: 0 0 3px 5px; font-size: 12.7px; font-family: "Open Sans", "Noto Sans CJK SC", sans-serif; color: #2a2a2a; white-space: pre;`;
const Siemens = styled.div`margin-left: auto; font: 700 13px "Open Sans", sans-serif; color: #129c9c; letter-spacing: .55px;`;
const WinBtns = styled.div`display: flex; align-items: center; gap: ${p => p.$gap}px; margin-right: ${p => p.$right}px; margin-left: ${p => p.$left};`;
const MenuBar = styled.div`height: 27px; flex: none; display: flex; align-items: center; background: #c8d7d6; padding-left: 7px;`;
const MenuLogo = styled.svg`flex: none; margin-right: 6px;`;
const MenuItem = styled.div`font-size: 12px; color: #2b2b2b; margin: 0 ${p => p.$gap ?? 10.7}px 3px 0; white-space: nowrap; letter-spacing: -.1px;`;

const Win = ({ dark }) => {
  const c = dark ? '#222' : '#555';
  return (
    <>
      <svg width="12" height="12"><path d="M2 10.500h8" stroke={c} strokeWidth="2" /></svg>
      <svg width="14" height="14"><path d="M1.500 4.500h8v8h-8ZM4.500 4.500v-3h8v8h-3" fill="none" stroke={c} strokeWidth={dark ? 1.5 : 1.1} /></svg>
      <svg width="14" height="14"><path d="M2 2 12 12M12 2 2 12" stroke={c} strokeWidth={dark ? 2 : 1.300} /></svg>
    </>
  );
};

const Rows = styled.div`flex: none; display: flex; flex-direction: column;`;
const Row = styled.div`height: 34px; display: flex; background: #fff;`;
const SelRow = styled.div`height: 32px; display: flex; align-items: center; background: #fff;`;
const Bar = styled.div`
  width: ${p => p.$w}px; margin-left: ${p => p.$ml ?? 0}px; flex: none; display: flex; align-items: center;
  border-bottom: 2px solid #e6e6e6; border-right: 2px solid #e6e6e6; padding-top: 1px;
`;
const Grip = styled.div`
  width: 8px; height: 24px; flex: none; position: relative;
  &::before { content: ''; position: absolute; left: 3px; top: 2px; bottom: 0; border-left: 2px dotted #a8a8a8; }
`;
const Cell = styled.div`
  width: ${p => p.$w ?? 31}px; height: ${p => p.$h ?? 31}px; flex: none; display: flex; align-items: center; justify-content: center;
  ${p => p.$on ? 'background: #c4d6d3; box-shadow: inset 0 0 0 1px #9dbab5;' : ''}
`;
const Drop = styled.div`
  width: 12px; flex: none; height: ${p => p.$low ? 10 : 6}px; display: flex; align-items: ${p => p.$low ? 'flex-end' : 'center'}; justify-content: center;
  margin-top: ${p => p.$low ? 17 : 0}px;
  &::before { content: ''; border: 3.5px solid transparent; border-top: 4px solid #111; border-bottom: 0; }
`;
const EndDrop = styled(Drop)`margin-left: auto; margin-right: 3px;`;
const Sep = styled.div`width: 1px; height: 24px; background: #d5d5d5; margin: 0 2px; flex: none;`;
const Gap = styled.div`width: ${p => p.$w ?? 5}px; height: ${p => p.$h ?? 1}px; flex: none;`;
const StartLabel = styled.div`width: 22px; font-size: 11px; flex: none; white-space: nowrap;`;
const Field = styled.div`
  width: ${p => p.$w}px; height: 20px; flex: none; display: flex; align-items: center; justify-content: space-between;
  margin: ${p => p.$m ?? '0'}; border: 1px solid #a9a9a9; background: #fff; padding: 0 3px; font-size: 12px; color: #222; white-space: nowrap;
`;
const Tri = styled.span`
  border: 4px solid transparent; border-top: 5px solid #111; border-bottom: 0; margin-right: 2px; flex: none;
`;
const More = styled.div`margin-left: auto; width: 12px; margin-right: 2px; display: flex; flex-direction: column; align-items: center; font: 700 11px/12px "Liberation Sans", sans-serif; gap: 6px;`;

const Items = ({ list, w, size }) => list.map((t, i) => {
  if (t === '|') return <Sep key={i} />;
  if (t === '_') return <Gap key={i} />;
  if (t === 'v') return <Drop key={i} $low />;
  const on = t[0] === '*';
  const dd = t.endsWith('+');
  const name = t.replace('*', '').replace('+', '');
  return (
    <React.Fragment key={i}>
      <Cell $on={on} $w={w} $h={w ? 24 : 31}><Icon name={name} size={size} /></Cell>
      {dd && <Drop />}
    </React.Fragment>
  );
});

const Content = styled.div`flex: 1; min-height: 0; display: flex;`;
const LeftCol = styled.div`width: 46px; flex: none; background: #fff;`;
const LeftBar = styled.div`
  height: 617px; display: flex; flex-direction: column; align-items: center; padding-top: 5px;
  border-right: 2px solid #e6e6e6; border-bottom: 2px solid #e6e6e6;
`;
const HGrip = styled.div`width: 40px; height: 5px; flex: none; border-top: 2px dotted #a8a8a8;`;
const LeftRow = styled.div`width: 44px; display: flex; align-items: center; flex: none; height: 31px; padding-left: 7px;`;
const HSep = styled.div`width: 38px; height: 1px; flex: none; background: #d8d8d8; margin: 2px 0 3px;`;
const VertText = styled.div`writing-mode: vertical-rl; height: 47px; font-size: 10px; line-height: 12px; color: #c9cfd6; flex: none; display: flex; align-items: center;`;
const LeftEnd = styled.div`width: 0; height: 0; align-self: flex-start; margin: 5px 0 0 8px; border: 3px solid transparent; border-right: 4px solid #111; border-left: 0;`;
const FlagCell = styled(Cell)`margin: 3px 0;`;

const Viewport = styled.div`
  flex: 1; min-width: 0; position: relative; overflow: hidden; border-top: 1px solid #8f9699;
  background: linear-gradient(#b0b1b3 0%, #e5e6e8 80%);
`;
const Model = styled.svg`position: absolute; left: 614px; top: 232px;`;
const Triad = styled.svg`position: absolute; left: 14px; top: 689px;`;

const Panel = styled.div`
  width: 258px; flex: none; background: #fff; border-left: 1px solid #87969b; border-top: 1px solid #8f9699;
  padding-left: 9px; display: flex; flex-direction: column;
`;
const PanelHead = styled.div`height: 27px; flex: none; display: flex; align-items: center; padding-left: 3px; gap: 9px; font-size: 12px; color: #333;`;
const TreeBox = styled.div`width: 242px; height: 380px; flex: none; border: 2px solid #e2e2e2; border-bottom-width: 3px; display: flex; flex-direction: column; overflow: hidden;`;
const TreeHead = styled.div`height: 21px; flex: none; display: flex; background: #f0f0f0; border-bottom: 1px solid #dcdcdc; font-size: 12px; color: #333;`;
const NameCol = styled.div`width: 200px; display: flex; align-items: center; padding-left: 6px;`;
const Latest = styled.div`flex: 1; border-left: 2px solid #dcdcdc; padding-left: 5px; display: flex; align-items: center;`;
const Caret = styled.span`margin-left: ${p => p.$ml}px; border: 4.5px solid transparent; border-bottom: 5px solid #222; border-top: 0;`;
const TreeMain = styled.div`height: 339px; flex: none; display: flex; overflow: hidden;`;
const TreeRows = styled.div`width: 222px; flex: none;`;
const TreeRow = styled.div`height: 20px; display: flex; align-items: center; background: ${p => p.$alt ? '#f8f8f8' : '#fff'}; border-bottom: 1px solid #eee; font-size: 12px; color: #444;`;
const RowName = styled.div`width: 200px; flex: none; display: flex; align-items: center; height: 100%; position: relative; padding-left: 41px; font-weight: ${p => p.$b ? 700 : 400}; color: ${p => p.$b ? '#222' : '#444'}; white-space: nowrap;`;
const Branch = styled.span`
  position: absolute; left: 29px; top: 0; width: 10px; height: ${p => p.$last ? '50%' : '100%'};
  border-left: 1px dotted #777;
  &::after { content: ''; position: absolute; left: 0; top: ${p => p.$last ? '100%' : '10px'}; width: 9px; border-top: 1px dotted #777; }
`;
const Check = styled.span`width: 12px; height: 12px; flex: none; border: 1px solid #111; background: #fff; display: flex; align-items: center; justify-content: center; margin-right: 1px;`;
const RowLabel = styled.span`margin-left: 2px;`;
const RowOk = styled.div`flex: 1; height: 100%; border-left: 2px solid #eee; display: flex; align-items: center; justify-content: center;`;
const VScroll = styled.div`width: 16px; flex: none; background: #f0f0f0; position: relative; display: flex; flex-direction: column; justify-content: space-between; align-items: center; padding: 2px 0;`;
const VThumb = styled.div`position: absolute; left: 0; right: 0; top: 254px; height: 63px; background: #cdcdcd;`;
const HScroll = styled.div`height: 15px; flex: none; background: #f0f0f0; position: relative; display: flex; justify-content: space-between; align-items: center; padding: 0 8px 0 4px;`;
const HThumb = styled.div`position: absolute; left: 17px; width: 103px; top: 0; bottom: 0; background: #cdcdcd;`;
const Splitter = styled.div`width: 242px; height: 5px; flex: none; background: #dedede; border: 1px solid #c4c4c4; border-top: 0; margin-top: -1px;`;
const Section = styled.div`
  width: ${p => p.$w ?? 242}px; height: ${p => p.$h}px; flex: none; display: flex; align-items: center; justify-content: space-between;
  padding: 0 4px 0 7px; font-size: 14px; color: #3c9ed4;
  ${p => p.$line ? 'border-bottom: 2px solid #cfcfcf;' : ''}
`;
const DetailBox = styled.div`width: 242px; height: 330px; flex: none; border: 2px solid #e2e2e2; border-top: 0; display: flex; flex-direction: column;`;
const PropTable = styled.div`margin: 2px 0 0 5px; width: 228px; height: 295px; flex: none; border: 2px solid #e2e2e2; overflow: hidden;`;
const PropRow = styled.div`height: 20px; display: flex; background: ${p => p.$head ? '#f0f0f0' : p.$alt ? '#f9f9f9' : '#fff'}; border-bottom: 1px solid #ebebeb; font-size: 12px; color: #333;`;
const PropCell = styled.div`width: ${p => p.$w}px; flex: none; border-right: ${p => p.$end ? 0 : 1}px solid #e6e6e6; display: flex; align-items: center; padding-left: ${p => p.$pad ?? 0}px;`;

const Tabs = styled.div`width: 32px; flex: none; background: #d9d9d9; display: flex; flex-direction: column; align-items: center; padding-top: 1px; border-top: 1px solid #8f9699;`;
const Tab = styled.div`
  width: 32px; height: ${p => p.$h}px; margin-top: ${p => p.$mt ?? 0}px; flex: none; display: flex; align-items: center; justify-content: center;
  ${p => p.$on ? 'background: #fff; width: 30px; align-self: flex-start; border: 1px solid #e6e6e6; border-left: 0;' : ''}
`;
const Bottom = styled.div`height: 17px; flex: none; display: flex; justify-content: space-between; overflow: hidden; background: #fff;`;
const BottomBar = styled.div`width: 529px; flex: none; display: flex; align-items: flex-start; padding-top: 1px; border-right: 2px solid #e6e6e6;`;
const Watermark = styled.div`height: 17px; font: 13.33px/17px "Liberation Mono", monospace; color: #6f6f6f; margin-right: 5px; white-space: pre; display: flex;`;
const WmCn = styled.span`font: 300 13px/16px "Noto Sans CJK SC", sans-serif; letter-spacing: 3px;`;

const row1 = [
  { w: 580, start: true, list: ['doc', 'folder', 'floppy', '|', 'scissors', 'copy', 'paste', 'x', '|', 'undo+', 'redo', '|', 'role+', '|'], search: true },
  { w: 410, ml: 6, combo: true, list: ['stack', 'stack+', '|', 'palette', '|', 'diaL+', 'diaL', 'diaC', 'dia4', '|', 'axis+', 'ruler+'] },
  { w: 207, ml: 2, list: ['pMove', 'pUp', 'pHand', 'cyl', 'pSwap', 'pX', 'v'] },
  { w: 282, ml: 32, list: ['bMeas', 'bX', 'gear', 'blockCyl', '|', 'blockLink', 'linkEd', '|', 'lock', 'lockG', 'v'] },
  { w: 182, ml: 30, list: ['cubesG', 'cubesAdd', 'cubeScale', 'mirror', '|', 'cubes3', 'v'] },
];
const row2 = [
  { w: 486, more: true, list: ['plane+', 'extrude+', 'hole1', 'hole2', 'hex1', 'hex2', '|', 'pegs+', 'plateUp', 'unite+', 'tubes', 'split+', 'split'] },
  { w: 703, list: ['plane+', '|', 'flag', 'spline+', 'circle', 'fillet', 'rect', 'cross', '|', 'skGray+', '|', 'dimGray+', '|', 'parallel', '|', 'extrude+', 'pegs+', 'split+', 'hex1+', 'bCube+', '|', 'pHand+', 'pX+'] },
  { w: 468, list: ['line+', 'surfPts', 'studio', 'pts', 'letterA', 'heart', 'sheetCurve', 'patch', 'drop', 'sheetPt', 'sheet2', 'meshUV', 'cylA', 'cylB', 'v'] },
  { w: 263, list: ['frame+', 'printer+', 'bCube+', 'grayPanel+', '|', 'slabA', 'slabB+'] },
];
const row3 = [
  { w: 271, list: ['wrenchDoc', 'trimX', 'trimT', 'curveX', 'filletD', 'pageArrow', 'arcUp', 'curves', 'v'] },
  { w: 415, list: ['surfPts+', '|', 'hand', 'swatch', '|', 'waveS', 'diaRed', 'wrenchFl', 'blueS', '|', 'ribbon', '_', 'rainbowS+', 'gridRed', '|', 'tube2', 'v'] },
  { w: 151, list: ['sheetBlue+', 'warp+', 'sheetGray+', 'v'] },
];
const sel = ['sf', '|', 'sf1', 'sfilter+', 'snap3', 'snap4', '|', 'marquee+', '|', 'iso', 'view', '|', '*ptsS', '*lineEnd', '*lineMid', 'curveS', '*vertex', 'arrowT', '*center', 'circPts', '*plus', '*lineMid', 'surfD', '|', 'gridS'];
const bottom = ['b1', 'b2', 'b3', '|', 'b4', 'b5', 'b6', 'b7', 'b8', 'b9', 'b10', '|', '*b11', 'b12', 'b13', 'b14', 'b15', 'b16'];
const menus = [['文件', 'F'], ['编辑', 'E'], ['视图', 'V'], ['插入', 'S'], ['格式', 'R'], ['工具', 'T'], ['装配', 'A'], ['信息', 'I'], ['分析', 'L', 17], ['首选项', 'P'], ['窗口', 'O'], ['GC工具箱'], ['帮助', 'H']];
const bodies = [96, 97, 99, 100, 102, 103, 105, 107, 109, 111, 113, 114, 116, 118, 119, 121];

const OkMark = ({ s = 14 }) => <svg width={s} height={s} viewBox="0 0 14 14"><path d="M1 7.500 5 12 13 2 5 8Z" fill="#1cc43a" stroke="#12a02c" strokeWidth="1" /></svg>;

const Toolbars = ({ bars }) => bars.map((b, i) => (
  <Bar key={i} $w={b.w} $ml={b.ml}>
    <Grip />
    {b.start && <><Cell><Icon name="globe" /></Cell><StartLabel>启动</StartLabel><Drop /></>}
    {b.combo && <Field $w={48} $m="0 4px 0 3px"><span>1</span><Tri /></Field>}
    <Items list={b.list} />
    {b.search && <><Field $w={125} $m="0 4px 0 10px"><span>查找命令</span><svg width="16" height="16" viewBox="0 0 16 16"><circle cx="10" cy="6" r="4.500" fill="#fff" stroke="#444" /><path d="M7 9 2 14" stroke="#444" strokeWidth="2" /></svg></Field><Drop $low /></>}
    {b.more && <More><span>»</span><Drop /></More>}
  </Bar>
));

const Rod = ({ d }) => (
  <g fill="none" strokeLinecap="butt">
    <path d={d} stroke="#2d3437" strokeWidth="36" />
    <path d={d} stroke="#8ea2aa" strokeWidth="32" />
    <path d={d} stroke="#bccdd4" strokeWidth="20" />
    <path d={d} stroke="#e6f0f4" strokeWidth="10" />
  </g>
);

const Model3D = () => {
  const edge = { stroke: '#2d3437', strokeWidth: 2, strokeLinejoin: 'round' };
  const d = '#525c5f', l = '#a1b1b8';
  return (
    <Model width="460" height="420" viewBox="0 0 1380 1260">
      <defs>
        <linearGradient id="hr" gradientUnits="userSpaceOnUse" x1="1000" y1="140" x2="1150" y2="400"><stop offset="0" stopColor="#6a7a80" /><stop offset=".4" stopColor="#8ea2aa" /><stop offset=".72" stopColor="#d9e9ef" /><stop offset="1" stopColor="#b0c4cb" /></linearGradient>
        <linearGradient id="hl" gradientUnits="userSpaceOnUse" x1="240" y1="730" x2="370" y2="980"><stop offset="0" stopColor="#4f595d" /><stop offset=".5" stopColor="#7c8b91" /><stop offset="1" stopColor="#95a4aa" /></linearGradient>
        <linearGradient id="rodH" x1="0" y1="0" x2="0" y2="1"><stop offset="0" stopColor="#4b5558" /><stop offset=".5" stopColor="#a6bac2" /><stop offset="1" stopColor="#e4eef2" /></linearGradient>
        <linearGradient id="band" x1="0" y1="0" x2="1" y2="1"><stop offset="0" stopColor="#525c5f" /><stop offset="1" stopColor="#d3e1e7" /></linearGradient>
        <linearGradient id="neck" gradientUnits="userSpaceOnUse" x1="860" y1="390" x2="960" y2="340"><stop offset="0" stopColor="#4f595d" /><stop offset=".3" stopColor="#4f595d" /><stop offset="1" stopColor="#d9e9ef" /></linearGradient>
        <linearGradient id="wedge" gradientUnits="userSpaceOnUse" x1="340" y1="1030" x2="450" y2="910"><stop offset="0" stopColor="#9cadb3" /><stop offset="1" stopColor="#3f484b" /></linearGradient>
        <radialGradient id="glow" gradientUnits="userSpaceOnUse" cx="495" cy="730" r="110"><stop offset="0" stopColor="#f6fbfd" /><stop offset=".55" stopColor="#a6b8c0" /><stop offset="1" stopColor="#4f595d" /></radialGradient>
      </defs>
      <path d="M720 118 780 150 840 215 870 275 1185 920 1105 988 940 850 975 790 918 690 820 620 685 365 740 320 695 245 640 200 575 130Z" fill={l} {...edge} />
      <path d="M575 128 655 65 690 95 635 118 710 118 775 165 690 235 640 200 590 150Z" fill={d} {...edge} />
      <path d="M690 235 775 165 797 190 706 257Z" fill="url(#band)" {...edge} />
      <path d="M1015 775 1105 835 1060 740" fill="none" {...edge} />
      <path d="M835 435 895 550" stroke="#2d3437" strokeWidth="8" />
      <path d="M835 435 895 550" stroke="#c5d4da" strokeWidth="4" />
      <path d="M820 620 900 557 1005 620 920 685Z" fill={d} {...edge} />
      <path d="M905 668 990 607 1005 625 922 697Z" fill="url(#band)" {...edge} />
      <path d="M918 830 1015 775 1185 920 1105 988 940 852Z" fill={d} {...edge} />
      <path d="M1015 775 1185 920 1175 928 1010 790Z" fill="#aebdc3" />
      <path d="M810 315 860 290 1072 52 1210 325 1130 368 975 440 900 480 865 390Z" fill="url(#hr)" {...edge} />
      <path d="M810 315 860 290 920 350 975 440 900 480 865 390Z" fill="url(#neck)" {...edge} />
      <path d="M1072 52C1150 120 1240 240 1272 335L1272 350 1200 325 1135 180Z" fill="#9db0b8" {...edge} />
      <path d="M1190 328 1272 350 1170 392 1130 368Z" fill="#414a4d" {...edge} />
      <path d="M975 440 1130 365 1140 385 1000 455 955 490 975 460Z" fill="#424b4e" />
      <path d="M940 465C895 490 890 540 905 552L960 577C965 540 945 510 975 470Z" fill="#5d686c" {...edge} />
      <path d="M685 365 772 295 865 390 790 458Z" fill={d} {...edge} />
      <path d="M690 75H1060L1010 117H690Z" fill="url(#rodH)" {...edge} />
      <path d="M1005 120C1040 130 1060 105 1060 70L1072 52 1040 110Z" fill="#dce8ed" {...edge} />
      <Rod d="M1150 372 995 785" />
      <path d="M380 283 558 418 905 1140 825 1208 650 1062 690 1000 640 915 535 835 410 580 495 515 440 510 410 455 340 395Z" fill={l} {...edge} />
      <path d="M495 515 555 630 612 770" fill="none" {...edge} />
      <path d="M295 350 378 283 510 390 410 455 340 395Z" fill={d} {...edge} />
      <path d="M410 455 492 385 512 410 425 478Z" fill="url(#band)" {...edge} />
      <path d="M535 835 620 775 725 830 640 900Z" fill={d} {...edge} />
      <path d="M615 888 705 825 725 850 637 922Z" fill="url(#band)" {...edge} />
      <path d="M730 980 905 1140 825 1208 650 1062Z" fill={d} {...edge} />
      <path d="M730 980 825 1055 733 880" fill="none" {...edge} />
      <path d="M740 980 905 1135 895 1145 735 1005Z" fill="#aebdc3" />
      <path d="M410 580 495 515 560 640 510 690Z" fill="#5b6569" {...edge} />
      <path d="M105 812 375 670 430 720 500 840 300 1020 240 1085Z" fill="url(#hl)" {...edge} />
      <path d="M500 845 300 1020 330 1070 295 1113 240 1085 300 1060 370 1025Z" fill="url(#wedge)" {...edge} />
      <path d="M375 670 405 640 510 700 580 800 535 835 480 850 430 760Z" fill="url(#glow)" {...edge} />
      <path d="M470 855 515 822 530 845 490 862Z" fill="#3a4245" />
      <path d="M105 812C160 900 240 1000 305 1035L240 1085Z" fill="#a4b5bb" {...edge} />
      <path d="M240 1085 330 1068 295 1113Z" fill="#4b5558" {...edge} />
      <path d="M305 1022H675L648 1062H290Z" fill="url(#rodH)" {...edge} />
      <Rod d="M155 795 315 365" />
      <path d="M380 637 466 705 418 674Z" fill="#1030d8" />
      <path d="M485 703 602 612 530 680Z" fill="#2a8e2e" />
      <path d="M478 725 525 825 505 770Z" fill="#e22020" />
      <g fontFamily="Liberation Sans" fontSize="32">
        <text x="382" y="627" fill="#2c62f0">ZC</text>
        <text x="555" y="597" fill="#35a63a">YC</text>
        <text x="473" y="858" fill="#d83434">XC</text>
      </g>
      <g stroke="#a69a6c" strokeWidth="1.600" fill="none">
        <path d="M655 570 750 492 820 548 725 625ZM655 570 765 708 700 655 725 625M655 570 735 730M750 492 865 400M725 625 700 655 735 705" />
        <path d="M643 570h24M655 558v24" />
      </g>
      <path d="M805 450 868 402 825 450Z" fill="#9e9268" />
      <path d="M760 655 782 662 770 672Z" fill="#8a7f58" />
      <path d="M718 695 738 725 715 712Z" fill="#a69a6c" />
      <g fontFamily="Liberation Sans" fontSize="32" fill="#b4a97e">
        <text x="852" y="423">Z</text><text x="795" y="702">Y</text><text x="730" y="763">X</text>
      </g>
    </Model>
  );
};

const TriadView = () => (
  <Triad width="100" height="90" viewBox="60 877 100 90">
    <path d="M115 892 138 921 120 934 97 906Z" fill="#c4c4c6" fillOpacity=".75" stroke="#a8a8aa" />
    <path d="M115 892 120 910 107 925M120 910 137 921" fill="none" stroke="#b0b0b2" />
    <path d="M107 925 96 911" stroke="#a8b4d8" strokeWidth="5" />
    <path d="M108 923 130 905" stroke="#a8c4a8" strokeWidth="4" />
    <path d="M110 925 118 942" stroke="#dba8a8" strokeWidth="4" />
    <path d="M95 911 85 901 91 900 98 906Z" fill="#0c2ac4" stroke="#0c2ac4" strokeWidth="1.500" />
    <path d="M130 905 142 895 137 903 132 908Z" fill="#1f7a24" stroke="#1f7a24" strokeWidth="1.500" />
    <path d="M117 942 124 955 122 944Z" fill="#e02424" stroke="#e02424" strokeWidth="1.500" />
    <g fontFamily="Liberation Sans" fontSize="12">
      <text x="78" y="903" fill="#2c62f0">Z</text>
      <text x="142" y="895" fill="#35a63a">Y</text>
      <text x="121" y="961" fill="#d83434">X</text>
    </g>
  </Triad>
);

export default function App() {
  return (
    <Shell>
      <Global />
      <TitleBar>
        <Progress />
        <Logo>NX</Logo>
        <Title>CAM Express 10 - 建模 - [P2-2厚_stp_igs.prt （修改的） ]</Title>
        <Siemens>SIEMENS</Siemens>
        <WinBtns $gap={11} $left="26px" $right={7}><Win /></WinBtns>
      </TitleBar>
      <MenuBar>
        <MenuLogo width="16" height="18" viewBox="0 0 16 18"><path d="M2 5 8 1l6 3v9l-6 4-6-3Z" fill="#2c6ad8" /><path d="M4 6l4-2 3 2-3 2v5l-4-2Z" fill="#dfe8fa" /></MenuLogo>
        {menus.map(([m, k, g]) => (
          <MenuItem key={m} $gap={g}>{m}{k && <>(<u>{k}</u>)</>}</MenuItem>
        ))}
        <WinBtns $gap={6} $left="auto" $right={7}><Win dark /></WinBtns>
      </MenuBar>
      <Rows>
        <Row><Toolbars bars={row1} /></Row>
        <Row><Toolbars bars={row2} /></Row>
        <Row><Toolbars bars={row3} /></Row>
        <SelRow>
          <Field $w={132} $m="0 8px 0 5px"><span>没有选择过滤器</span><Tri /></Field>
          <Field $w={139} $m="0 6px 0 0"><span>整个装配</span><Tri /></Field>
          <Items list={sel} w={22.9} size={19} />
          <EndDrop $low />
        </SelRow>
      </Rows>
      <Content>
        <LeftCol>
          <LeftBar>
            <HGrip />
            <Cell $w={44}><Icon name="role" /></Cell>
            <FlagCell $w={24} $h={25} $on><Icon name="flag" size={24} /></FlagCell>
            <VertText>完成草图</VertText>
            {['spline', 'line', 'arc', 'circle', 'fillet', 'chamfer', 'rect', 'hexS', 'studio', 'cross'].map(n => <Cell key={n} $w={44}><Icon name={n} size={24} /></Cell>)}
            <LeftRow><Icon name="offset" size={24} /><Drop /></LeftRow>
            <HSep />
            <LeftRow><Icon name="skGray" size={24} /><Drop /></LeftRow>
            <HSep />
            <LeftRow><Icon name="dimGray" size={24} /><Drop /></LeftRow>
            <HSep />
            <Gap $h={4} />
            <Cell $w={44}><Icon name="parallel" size={24} /></Cell>
            <LeftRow><Icon name="parallel2" size={24} /><Drop /></LeftRow>
            <LeftEnd />
          </LeftBar>
        </LeftCol>
        <Viewport>
          <Model3D />
          <TriadView />
        </Viewport>
        <Panel>
          <PanelHead><Icon name="rectIc" size={14} />部件导航器</PanelHead>
          <TreeBox>
            <TreeHead>
              <NameCol>名称<Caret $ml={20} /></NameCol>
              <Latest>最新</Latest>
            </TreeHead>
            <TreeMain>
              <TreeRows>
                {bodies.map((n, i) => (
                  <TreeRow key={n} $alt={i % 2 === 1}>
                    <RowName><Branch /><Check><OkMark s={11} /></Check><Icon name="body" size={17} /><RowLabel>体 ({n})</RowLabel></RowName>
                    <RowOk><OkMark /></RowOk>
                  </TreeRow>
                ))}
                <TreeRow>
                  <RowName $b><Branch $last /><Check><OkMark s={11} /></Check><Icon name="csys" size={17} /><RowLabel>基准坐标系 (123)</RowLabel></RowName>
                  <RowOk><OkMark /></RowOk>
                </TreeRow>
              </TreeRows>
              <VScroll>
                <VThumb />
                <ChevronUp size={12} strokeWidth={2.5} color="#555" />
                <ChevronDown size={12} strokeWidth={2.5} color="#555" />
              </VScroll>
            </TreeMain>
            <HScroll>
              <HThumb />
              <ChevronLeft size={12} strokeWidth={2.5} color="#555" />
              <ChevronRight size={12} strokeWidth={2.5} color="#555" />
            </HScroll>
          </TreeBox>
          <Splitter />
          <Section $h={25} $line>相依性<ChevronDown size={16} strokeWidth={2.6} color="#2e86b8" /></Section>
          <DetailBox>
            <Section $h={25} $w={238}>细节<ChevronUp size={16} strokeWidth={2.6} color="#2e86b8" /></Section>
            <PropTable>
              <PropRow $head>
                <PropCell $w={64} $pad={8}>参数</PropCell>
                <PropCell $w={40} $pad={7}>值</PropCell>
                <PropCell $w={88} $pad={7}>表达式<Caret $ml={17} /></PropCell>
                <PropCell $w={32} $end />
              </PropRow>
              {Array.from({ length: 14 }, (_, i) => (
                <PropRow key={i} $alt={i % 2 === 1}>
                  <PropCell $w={64} /><PropCell $w={40} /><PropCell $w={88} /><PropCell $w={32} $end />
                </PropRow>
              ))}
            </PropTable>
          </DetailBox>
          <Section $h={26} $line>预览<ChevronDown size={16} strokeWidth={2.6} color="#2e86b8" /></Section>
        </Panel>
        <Tabs>
          <Tab $h={24}><Icon name="cog" size={18} /></Tab>
          <Tab $h={50} $mt={13}><Icon name="tAsm" size={28} /></Tab>
          <Tab $h={34}><Icon name="tMirror" size={26} /></Tab>
          <Tab $h={46} $mt={2} $on><Icon name="tCam" size={26} /></Tab>
          <Tab $h={40}><Icon name="books" size={26} /></Tab>
          <Tab $h={70}><Icon name="info" size={26} /></Tab>
          <Tab $h={38}><Icon name="pageG" size={24} /></Tab>
          <Tab $h={64}><Icon name="clock" size={24} /></Tab>
          <Tab $h={22}><Icon name="rainbow" size={24} /></Tab>
          <Tab $h={58}><Icon name="wand" size={26} /></Tab>
          <Tab $h={30}><Icon name="tools" size={26} /></Tab>
          <Tab $h={50}><Icon name="door" size={24} /></Tab>
        </Tabs>
      </Content>
      <Bottom>
        <BottomBar>
          <Grip />
          <Items list={bottom} />
        </BottomBar>
        <Watermark>UG<WmCn>爱好者论坛</WmCn> WWW.UGSNX.COM</Watermark>
      </Bottom>
    </Shell>
  );
}
